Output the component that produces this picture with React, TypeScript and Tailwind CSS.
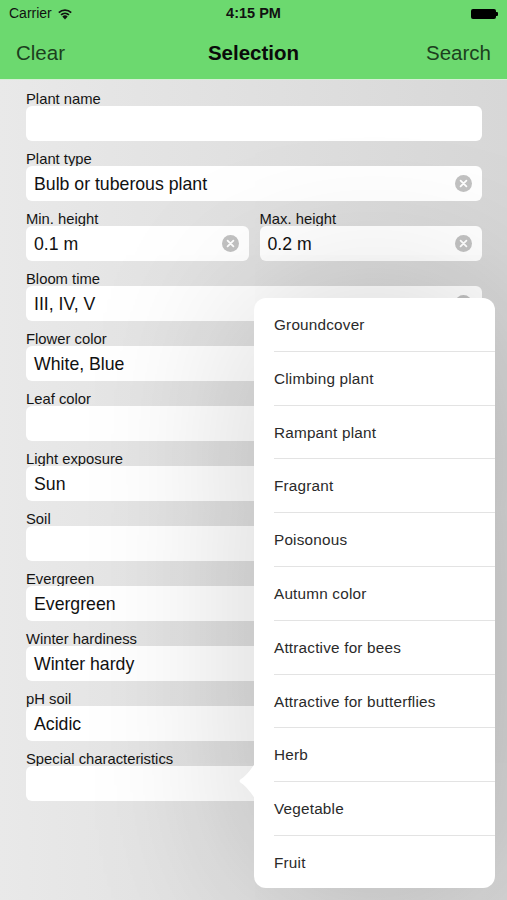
import React from "react";

const font = { fontFamily: '"Liberation Sans", Arial, sans-serif' };

function ClearBtn() {
  return (
    <svg width="17" height="17" viewBox="0 0 17 17" className="shrink-0 mr-[10px]">
      <circle cx="8.5" cy="8.5" r="8.5" fill="#c2c2c2" />
      <path d="M5.6 5.6 L11.4 11.4 M11.4 5.6 L5.6 11.4" stroke="#ffffff" strokeWidth="1.8" strokeLinecap="round" />
    </svg>
  );
}

function Field({ label, value, clear }: { label: string; value?: string; clear?: boolean }) {
  return (
    <div className="flex flex-col min-w-0">
      <div className="h-[16px] text-[14.8px] leading-[18px] text-[#141414] whitespace-nowrap">{label}</div>
      <div className="h-[35px] rounded-[6px] bg-white flex items-center">
        <div className="flex-1 pl-[8px] pt-[1px] text-[17.7px] text-[#111] whitespace-nowrap overflow-hidden">{value}</div>
        {clear && value ? <ClearBtn /> : null}
      </div>
    </div>
  );
}

const items = [
  "Groundcover",
  "Climbing plant",
  "Rampant plant",
  "Fragrant",
  "Poisonous",
  "Autumn color",
  "Attractive for bees",
  "Attractive for butterflies",
  "Herb",
  "Vegetable",
  "Fruit",
];

export default function App() {
  return (
    <div className="relative w-[507px] h-[900px] overflow-hidden bg-gradient-to-r from-[#e9e9e9] to-[#d7d7d7]" style={font}>
      {/* status bar */}
      <div className="bg-[#6cd96f]">
        <div className="h-[27px] relative flex items-center px-[9px]">
          <span className="text-[14px] text-[#111]">Carrier</span>
          <svg width="16" height="12" viewBox="0 0 16 12" className="ml-[5px]">
            <path d="M8 11.5 L5.3 8.4 A4 4 0 0 1 10.7 8.4 Z" fill="#111" />
            <path d="M3.4 6.3 A6.8 6.8 0 0 1 12.6 6.3 L11.4 7.6 A5 5 0 0 0 4.6 7.6 Z" fill="#111" />
            <path d="M1.2 4 A10 10 0 0 1 14.8 4 L13.6 5.3 A8.2 8.2 0 0 0 2.4 5.3 Z" fill="#111" />
          </svg>
          <span className="absolute left-0 right-0 text-center text-[14.5px] font-bold text-[#111]">4:15 PM</span>
          <div className="ml-auto flex items-center">
            <div className="w-[25px] h-[10px] rounded-[2px] bg-black" />
            <div className="w-[2px] h-[4px] bg-black rounded-r-[1px]" />
          </div>
        </div>
        <div className="h-[52px] relative flex items-center px-[16px]">
          <span className="text-[20.5px] text-[#1c3f1e]">Clear</span>
          <span className="absolute left-0 right-0 text-center text-[20.5px] font-bold text-[#0a0a0a]">Selection</span>
          <span className="ml-auto text-[20.5px] text-[#1c3f1e]">Search</span>
        </div>
      </div>
      <div className="h-px bg-[#d6efd6]" />

      {/* form */}
      <div className="pt-[10px] pl-[26px] pr-[25px] flex flex-col gap-[9px]">
        <Field label="Plant name" />
        <Field label="Plant type" value="Bulb or tuberous plant" clear />
        <div className="grid grid-cols-2 gap-[11px]">
          <Field label="Min. height" value="0.1 m" clear />
          <Field label="Max. height" value="0.2 m" clear />
        </div>
        <Field label="Bloom time" value="III, IV, V" clear />
        <Field label="Flower color" value="White, Blue" clear />
        <Field label="Leaf color" />
        <Field label="Light exposure" value="Sun" clear />
        <Field label="Soil" />
        <Field label="Evergreen" value="Evergreen" clear />
        <Field label="Winter hardiness" value="Winter hardy" clear />
        <Field label="pH soil" value="Acidic" clear />
        <Field label="Special characteristics" />
      </div>

      {/* popover */}
      <div className="absolute left-[254px] top-[298px] w-[241px] h-[590px] rounded-[12px] bg-white shadow-[0_0_170px_rgba(0,0,0,0.2)]">
        <svg width="18" height="38" viewBox="0 0 18 38" className="absolute left-[-16px] top-[464px]">
          <path d="M18 0 C14 6 8 14 3 17 Q0 19 3 21 C8 24 14 32 18 38 Z" fill="#ffffff" />
        </svg>
        <div className="flex flex-col h-full overflow-hidden rounded-[12px]">
          {items.map((t, i) => (
            <div key={t} className="h-[53.8px] shrink-0 pl-[20px] flex flex-col">
              <div className="flex-1 flex items-center pt-[2px] text-[15.3px] text-[#2a2a2a] tracking-[0.2px]">{t}</div>
              {i < items.length - 1 ? <div className="h-px bg-[#e3e3e3]" /> : null}
            </div>
          ))}
        </div>
      </div>
    </div>
  );
}
